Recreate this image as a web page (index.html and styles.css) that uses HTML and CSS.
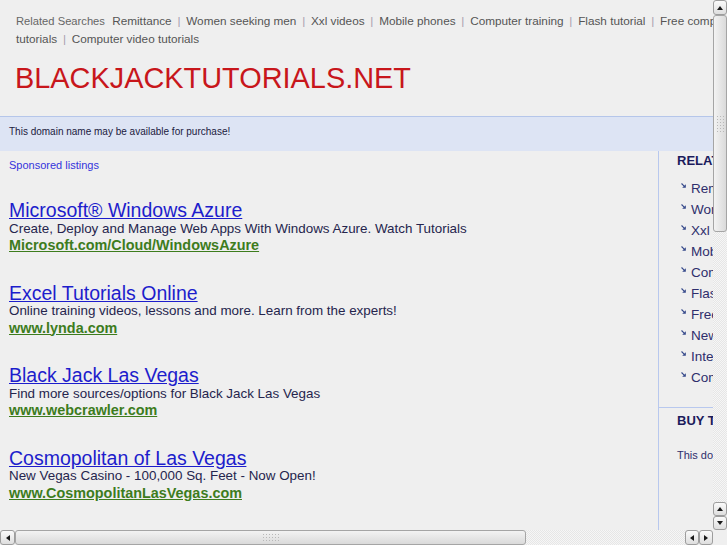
FILE: index.html
```html
<!DOCTYPE html>
<html>
<head>
<meta charset="utf-8">
<title>blackjacktutorials.net</title>
<link rel="stylesheet" href="styles.css">
</head>
<body>
<div class="window">
  <div class="viewport">
    <div class="page">
      <div class="related">
        <span class="rs-label">Related Searches</span>
        <a href="#">Remittance</a> <span class="sep">|</span> <a href="#">Women seeking men</a> <span class="sep">|</span> <a href="#">Xxl videos</a> <span class="sep">|</span> <a href="#">Mobile phones</a> <span class="sep">|</span> <a href="#">Computer training</a> <span class="sep">|</span> <a href="#">Flash tutorial</a> <span class="sep">|</span> <a href="#">Free computer tutorials</a> <span class="sep">|</span> <a href="#">Computer video tutorials</a>
      </div>
      <h1 class="domain">BLACKJACKTUTORIALS.NET</h1>
      <div class="notice">This domain name may be available for purchase!</div>
      <div class="content">
        <div class="main">
          <a class="sponsored" href="#">Sponsored listings</a>
          <div class="ads">
            <div class="ad">
              <a class="ad-title" href="#">Microsoft® Windows Azure</a>
              <div class="ad-desc">Create, Deploy and Manage Web Apps With Windows Azure. Watch Tutorials</div>
              <a class="ad-url" href="#">Microsoft.com/Cloud/WindowsAzure</a>
            </div>
            <div class="ad">
              <a class="ad-title" href="#">Excel Tutorials Online</a>
              <div class="ad-desc">Online training videos, lessons and more. Learn from the experts!</div>
              <a class="ad-url" href="#">www.lynda.com</a>
            </div>
            <div class="ad">
              <a class="ad-title" href="#">Black Jack Las Vegas</a>
              <div class="ad-desc">Find more sources/options for Black Jack Las Vegas</div>
              <a class="ad-url" href="#">www.webcrawler.com</a>
            </div>
            <div class="ad">
              <a class="ad-title" href="#">Cosmopolitan of Las Vegas</a>
              <div class="ad-desc">New Vegas Casino - 100,000 Sq. Feet - Now Open!</div>
              <a class="ad-url" href="#">www.CosmopolitanLasVegas.com</a>
            </div>
          </div>
        </div>
        <div class="side">
          <div class="side-box">
            <h2 class="side-title">RELATED SEARCHES</h2>
            <ul class="side-list">
              <li><svg class="bullet" viewBox="0 0 5 5" width="5" height="5"><path d="M0.5 0.5 L3.4 3.4" stroke="#34488a" stroke-width="1.1"/><polygon points="1.2,4.8 4.8,4.8 4.8,1.2" fill="#34488a"/></svg><a href="#">Remittance</a></li>
              <li><svg class="bullet" viewBox="0 0 5 5" width="5" height="5"><path d="M0.5 0.5 L3.4 3.4" stroke="#34488a" stroke-width="1.1"/><polygon points="1.2,4.8 4.8,4.8 4.8,1.2" fill="#34488a"/></svg><a href="#">Women seeking men</a></li>
              <li><svg class="bullet" viewBox="0 0 5 5" width="5" height="5"><path d="M0.5 0.5 L3.4 3.4" stroke="#34488a" stroke-width="1.1"/><polygon points="1.2,4.8 4.8,4.8 4.8,1.2" fill="#34488a"/></svg><a href="#">Xxl videos</a></li>
              <li><svg class="bullet" viewBox="0 0 5 5" width="5" height="5"><path d="M0.5 0.5 L3.4 3.4" stroke="#34488a" stroke-width="1.1"/><polygon points="1.2,4.8 4.8,4.8 4.8,1.2" fill="#34488a"/></svg><a href="#">Mobile phones</a></li>
              <li><svg class="bullet" viewBox="0 0 5 5" width="5" height="5"><path d="M0.5 0.5 L3.4 3.4" stroke="#34488a" stroke-width="1.1"/><polygon points="1.2,4.8 4.8,4.8 4.8,1.2" fill="#34488a"/></svg><a href="#">Computer training</a></li>
              <li><svg class="bullet" viewBox="0 0 5 5" width="5" height="5"><path d="M0.5 0.5 L3.4 3.4" stroke="#34488a" stroke-width="1.1"/><polygon points="1.2,4.8 4.8,4.8 4.8,1.2" fill="#34488a"/></svg><a href="#">Flash tutorial</a></li>
              <li><svg class="bullet" viewBox="0 0 5 5" width="5" height="5"><path d="M0.5 0.5 L3.4 3.4" stroke="#34488a" stroke-width="1.1"/><polygon points="1.2,4.8 4.8,4.8 4.8,1.2" fill="#34488a"/></svg><a href="#">Free computer tutorials</a></li>
              <li><svg class="bullet" viewBox="0 0 5 5" width="5" height="5"><path d="M0.5 0.5 L3.4 3.4" stroke="#34488a" stroke-width="1.1"/><polygon points="1.2,4.8 4.8,4.8 4.8,1.2" fill="#34488a"/></svg><a href="#">New videos</a></li>
              <li><svg class="bullet" viewBox="0 0 5 5" width="5" height="5"><path d="M0.5 0.5 L3.4 3.4" stroke="#34488a" stroke-width="1.1"/><polygon points="1.2,4.8 4.8,4.8 4.8,1.2" fill="#34488a"/></svg><a href="#">Internet tutorials</a></li>
              <li><svg class="bullet" viewBox="0 0 5 5" width="5" height="5"><path d="M0.5 0.5 L3.4 3.4" stroke="#34488a" stroke-width="1.1"/><polygon points="1.2,4.8 4.8,4.8 4.8,1.2" fill="#34488a"/></svg><a href="#">Computer video tutorials</a></li>
            </ul>
          </div>
          <div class="side-box2">
            <h2 class="side-title">BUY THIS DOMAIN</h2>
            <p class="side-text">This domain may be for sale!</p>
          </div>
        </div>
      </div>
    </div>
  </div>
  <div class="vscroll">
    <div class="sb-btn"><span class="tri-up"></span></div>
    <div class="sb-thumb-v"><span class="grip-v"></span></div>
    <div class="sb-track"></div>
    <div class="sb-btn"><span class="tri-up"></span></div>
    <div class="sb-btn"><span class="tri-down"></span></div>
  </div>
  <div class="hscroll">
    <div class="sb-btn-h"><span class="tri-left"></span></div>
    <div class="sb-thumb-h"><span class="grip-h"></span></div>
    <div class="sb-track"></div>
    <div class="sb-btn-h"><span class="tri-left"></span></div>
    <div class="sb-btn-h"><span class="tri-right"></span></div>
  </div>
  <div class="corner"></div>
</div>
</body>
</html>
```

FILE: styles.css
```css
* { box-sizing: border-box; }
html, body { margin: 0; padding: 0; }
body {
  background: #efefef;
  font-family: "Liberation Sans", Arial, sans-serif;
  overflow: hidden;
}
a { text-decoration: none; }

.window {
  display: grid;
  grid-template-columns: 713px 14px;
  grid-template-rows: 530px 15px;
  width: 727px;
  height: 545px;
}
.viewport { overflow: hidden; background: #efefef; }
.page { width: 931px; min-height: 1190px; }

/* related searches */
.related {
  width: 776px;
  padding: 12px 0 0 16px;
  font-size: 11.75px;
  line-height: 18px;
  color: #555;
}
.rs-label { font-size: 11.2px; color: #666; margin-right: 4px; }
.related a { color: #555; }
.sep { color: #a7a0b0; margin: 0 2.5px; }

.domain {
  margin: 13px 0 21px;
  padding-left: 15px;
  font-size: 28.9px;
  line-height: 34px;
  font-weight: normal;
  color: #c8161b;
}

.notice {
  height: 35px;
  border-top: 1px solid #b5c6ea;
  background: #dde4f4;
  padding: 8px 9px 0;
  font-size: 10px;
  line-height: 14px;
  color: #20203e;
}

.content { display: flex; min-height: 1040px; }
.main { width: 658px; padding: 7px 9px 0; }
.sponsored {
  display: block;
  font-size: 11px;
  line-height: 14px;
  color: #3434dc;
}
.ads { margin-top: 28px; display: flex; flex-direction: column; gap: 29px; }
.ad { display: flex; flex-direction: column; align-items: flex-start; }
.ad-title {
  font-size: 19.5px;
  line-height: 20.5px;
  color: #1d1dcc;
  text-decoration: underline;
}
.ad-desc {
  font-size: 13.4px;
  line-height: 16.5px;
  color: #25254d;
}
.ad-url {
  font-size: 14.4px;
  line-height: 16.5px;
  font-weight: bold;
  color: #3d7c1d;
  text-decoration: underline;
}

.side { flex: 1; border-left: 1px solid #b8c8ee; }
.side-box {
  padding: 2px 0 19px 18px;
  border-bottom: 1px solid #b8c8ee;
}
.side-box2 { padding: 5px 0 0 18px; }
.side-title {
  margin: 0;
  font-size: 13px;
  line-height: 16px;
  font-weight: bold;
  color: #1b1b5c;
}
.side-list { list-style: none; margin: 9px 0 0; padding: 0 0 0 4px; }
.side-list li {
  display: flex;
  align-items: flex-start;
  font-size: 13.5px;
  line-height: 21px;
  white-space: nowrap;
}
.side-list a { color: #2e2e6c; }
.bullet { margin: 5px 5px 0 0; flex: none; }
.side-text {
  margin: 18.5px 0 0;
  font-size: 11px;
  line-height: 14px;
  color: #2e2e6c;
}

/* scrollbars */
.vscroll { display: flex; flex-direction: column; background: #efefef; }
.hscroll { display: flex; flex-direction: row; background: #efefef; }
.corner { background: #efefef; }
.sb-track {
  flex: 1;
  background: repeating-conic-gradient(#f6f6f6 0 25%, #e6e6e6 0 50%) 0 0 / 2px 2px;
}
.sb-btn, .sb-btn-h {
  display: flex;
  align-items: center;
  justify-content: center;
  flex: none;
  border: 1px solid #9d9d9d;
  border-radius: 3px;
  background: linear-gradient(#fbfbfb, #dedede);
}
.sb-btn { width: 14px; height: 14px; }
.vscroll .sb-btn:first-child { height: 15px; }
.sb-btn-h { width: 14px; height: 15px; }
.hscroll .sb-btn-h:first-child { width: 15px; }
.sb-thumb-v {
  height: 217px;
  flex: none;
  display: flex;
  align-items: center;
  justify-content: center;
  border: 1px solid #a5a5a5;
  border-radius: 3px;
  background: linear-gradient(90deg, #f3f3f3, #dadada);
}
.sb-thumb-h {
  width: 511px;
  flex: none;
  display: flex;
  align-items: center;
  justify-content: center;
  border: 1px solid #a5a5a5;
  border-radius: 3px;
  background: linear-gradient(#f3f3f3, #dadada);
}
.grip-v {
  width: 9px;
  height: 18px;
  background: radial-gradient(circle, #b8b8b8 0.8px, transparent 1px) 0 0 / 3px 3px;
}
.grip-h {
  width: 18px;
  height: 9px;
  background: radial-gradient(circle, #b8b8b8 0.8px, transparent 1px) 0 0 / 3px 3px;
}
.tri-up { width: 0; height: 0; border-left: 3px solid transparent; border-right: 3px solid transparent; border-bottom: 4px solid #1a1a1a; }
.tri-down { width: 0; height: 0; border-left: 3px solid transparent; border-right: 3px solid transparent; border-top: 4px solid #1a1a1a; }
.tri-left { width: 0; height: 0; border-top: 3px solid transparent; border-bottom: 3px solid transparent; border-right: 4px solid #1a1a1a; }
.tri-right { width: 0; height: 0; border-top: 3px solid transparent; border-bottom: 3px solid transparent; border-left: 4px solid #1a1a1a; }
```
